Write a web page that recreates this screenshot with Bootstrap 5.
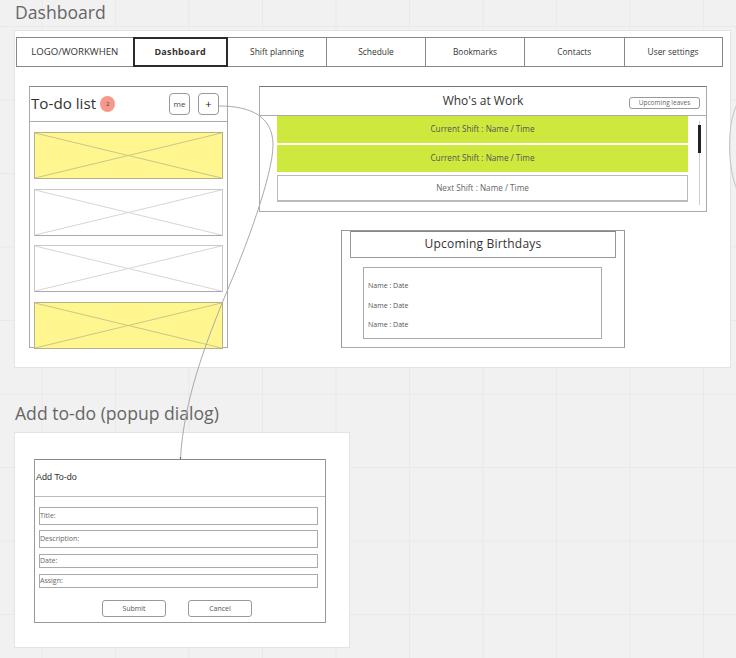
<!DOCTYPE html>
<html lang="en">
  <head>
    <meta charset="UTF-8" />
    <title>Dashboard wireframe</title>
    <link
      rel="stylesheet"
      href="https://cdn.jsdelivr.net/npm/bootstrap@5.3.0/dist/css/bootstrap.min.css"
    />
    <style>
      body {
        margin: 0;
        font-family: "Open Sans", sans-serif;
        color: #333;
        overflow: hidden;
      }
      /* board */
      .board {
        position: relative;
        width: 736px;
        height: 658px;
        overflow: hidden;
        background-color: #f1f1f1;
        background-image: linear-gradient(#e9e9e9 1px, transparent 1px),
          linear-gradient(90deg, #e9e9e9 1px, transparent 1px);
        background-size: 73.5px 73.5px;
        background-position: 41.5px 26px;
      }
      .frame-label {
        position: absolute;
        left: 15px;
        margin: 0;
        font-size: 17.6px;
        line-height: 24px;
        color: #666;
        font-weight: 400;
      }
      .frame {
        position: absolute;
        background: #fff;
        border: 1px solid #e4e4e4;
      }
      .frame-main {
        left: 14px;
        top: 30px;
        width: 717px;
        height: 338px;
        padding: 6px 0 0 1px;
      }
      .frame-popup {
        left: 14px;
        top: 432px;
        width: 336px;
        height: 216px;
        padding: 26px 0 0 19px;
      }
      .wires {
        position: absolute;
        left: 0;
        top: 0;
        pointer-events: none;
      }
      /* top menu */
      .menu-bar {
        display: grid;
        grid-template-columns: 116.5px 94.5px 99px 99px 99px 99.5px 98px;
        width: 706px;
        height: 30px;
        margin-left: 1px;
        font-size: 8.4px;
      }
      .menu-item {
        border: 1px solid #888;
        border-bottom-width: 1.5px;
        margin-left: -1px;
        color: #333;
        text-decoration: none;
      }
      .menu-item.is-logo {
        font-size: 9.6px;
      }
      .menu-item.is-current {
        border: 2px solid #2b2b2b;
        font-size: 9px;
        font-weight: 700;
        letter-spacing: 0.3px;
        z-index: 1;
      }
      /* to-do panel */
      .panels {
        margin: 19px 0 0 13px;
      }
      .todo-panel {
        width: 199px;
        height: 262px;
        border: 1px solid #aaa;
        border-top-color: #888;
      }
      .todo-head {
        height: 35px;
        border-bottom: 1px solid #aaa;
        padding: 0 8px 0 1px;
      }
      .todo-title {
        font-size: 15.2px;
        margin: 0 0 2px;
        font-weight: 400;
        color: #333;
      }
      .count-pill {
        width: 15px;
        height: 16px;
        margin-left: 4px;
        border-radius: 50%;
        background: #f6998a;
        font-size: 6px;
        color: #444;
      }
      .mini-btn {
        width: 21px;
        height: 22px;
        padding: 0;
        background: #fff;
        border: 1px solid #999;
        border-radius: 4px;
        font-size: 8px;
        color: #444;
      }
      .mini-btn + .mini-btn {
        margin-left: 8px;
        font-size: 11px;
        color: #222;
      }
      .todo-items {
        padding: 10px 4px 0 4px;
        gap: 9.5px;
      }
      .todo-card {
        display: block;
        width: 188.5px;
        height: 47px;
        background: #fff;
        border: 1px solid #c8c8c8;
        border-bottom-color: #aaa;
      }
      .todo-card line {
        stroke: #d4d4d4;
        stroke-width: 1;
      }
      .todo-card.is-flagged {
        background: #fff68f;
        border-color: #b5b28a;
      }
      .todo-card.is-flagged line {
        stroke: #c8c48a;
      }
      /* who's at work */
      .work-side {
        margin-left: 31px;
      }
      .work-panel {
        width: 448px;
        height: 126px;
        border: 1px solid #aaa;
        border-top-color: #777;
      }
      .work-head {
        position: relative;
        height: 29px;
        border-bottom: 1px solid #aaa;
        font-size: 12px;
        color: #333;
      }
      .leaves-btn {
        position: absolute;
        left: 369px;
        top: 10px;
        width: 71px;
        height: 12px;
        padding: 0;
        line-height: 10px;
        background: #fff;
        border: 1px solid #999;
        border-radius: 3px;
        font-size: 6.5px;
        color: #666;
      }
      .shift-list {
        padding-left: 17px;
        width: 428px;
      }
      .shift-row {
        width: 411px;
        font-size: 8.2px;
        color: #555;
      }
      .shift-now {
        height: 27px;
        margin-bottom: 1.5px;
        background: #cfe83e;
      }
      .shift-next {
        height: 27px;
        margin-top: 3.5px;
        border: 1px solid #bbb;
        border-bottom-width: 2px;
        background: #fff;
        color: #666;
      }
      .fake-scroll {
        position: absolute;
        left: 439px;
        top: 34px;
        width: 1px;
        height: 84px;
        background: #ccc;
      }
      .fake-scroll::before {
        content: "";
        position: absolute;
        left: -1px;
        top: 4px;
        width: 3px;
        height: 28px;
        background: #222;
      }
      /* birthdays */
      .bday-panel {
        width: 284px;
        height: 118px;
        margin: 18px 0 0 82px;
        border: 1px solid #999;
        border-bottom-color: #aaa;
      }
      .bday-head {
        width: 266px;
        height: 27px;
        margin: 0 0 0 8px;
        padding-bottom: 2px;
        border: 1px solid #999;
        border-top-color: #888;
        font-size: 12px;
        letter-spacing: 0.2px;
        color: #333;
      }
      .bday-box {
        width: 239px;
        height: 72px;
        margin: 9px 0 0 21px;
        padding: 8px 0 0 4px;
        border: 1px solid #aaa;
        font-size: 7px;
        color: #555;
      }
      .bday-box div {
        height: 19.5px;
        line-height: 19.5px;
      }
      /* dialog */
      .dialog-box {
        width: 292px;
        height: 164px;
        border: 1px solid #999;
        border-top-color: #888;
      }
      .dialog-head {
        height: 37px;
        padding-left: 1px;
        border-bottom: 1px solid #bbb;
        font-family: "Liberation Sans", Arial, sans-serif;
        font-size: 9px;
        color: #333;
      }
      .dialog-form {
        padding: 10px 0 0 4px;
      }
      .field-line {
        width: 279px;
        margin: 0;
        border: 1px solid #aaa;
        border-bottom-width: 1.5px;
        font-size: 7px;
        color: #666;
      }
      .field-tall {
        height: 18px;
        margin-bottom: 5px;
      }
      .field-tall + .field-short {
        margin-top: 6px;
      }
      .field-short {
        height: 14px;
        margin-bottom: 6px;
      }
      .dialog-actions {
        margin: 12px 0 0 63px;
        gap: 22px;
      }
      .dialog-btn {
        width: 64px;
        height: 17px;
        padding: 0;
        line-height: 14px;
        background: #fff;
        border: 1px solid #999;
        border-radius: 3px;
        font-size: 7px;
        color: #555;
      }
    </style>
  </head>
  <body>
    <div class="board">
      <h1 class="frame-label" style="top: 0px">Dashboard</h1>
      <section class="frame frame-main">
        <nav class="menu-bar">
          <a class="menu-item is-logo d-flex align-items-center justify-content-center" href="#">LOGO/WORKWHEN</a>
          <a class="menu-item is-current d-flex align-items-center justify-content-center" href="#">Dashboard</a>
          <a class="menu-item d-flex align-items-center justify-content-center" href="#">Shift planning</a>
          <a class="menu-item d-flex align-items-center justify-content-center" href="#">Schedule</a>
          <a class="menu-item d-flex align-items-center justify-content-center" href="#">Bookmarks</a>
          <a class="menu-item d-flex align-items-center justify-content-center" href="#">Contacts</a>
          <a class="menu-item d-flex align-items-center justify-content-center" href="#">User settings</a>
        </nav>

        <div class="panels d-flex align-items-start">
          <div class="todo-panel">
            <div class="todo-head d-flex align-items-center">
              <h2 class="todo-title">To-do list</h2>
              <span class="count-pill d-flex align-items-center justify-content-center">2</span>
              <div class="ms-auto d-flex">
                <button class="mini-btn" type="button">me</button>
                <button class="mini-btn" type="button">+</button>
              </div>
            </div>
            <div class="todo-items d-flex flex-column">
              <svg class="todo-card is-flagged" viewBox="0 0 189 47" preserveAspectRatio="none"><line x1="0" y1="0" x2="189" y2="47" /><line x1="0" y1="47" x2="189" y2="0" /></svg>
              <svg class="todo-card" viewBox="0 0 189 47" preserveAspectRatio="none"><line x1="0" y1="0" x2="189" y2="47" /><line x1="0" y1="47" x2="189" y2="0" /></svg>
              <svg class="todo-card" viewBox="0 0 189 47" preserveAspectRatio="none"><line x1="0" y1="0" x2="189" y2="47" /><line x1="0" y1="47" x2="189" y2="0" /></svg>
              <svg class="todo-card is-flagged" viewBox="0 0 189 47" preserveAspectRatio="none"><line x1="0" y1="0" x2="189" y2="47" /><line x1="0" y1="47" x2="189" y2="0" /></svg>
            </div>
          </div>

          <div class="work-side">
            <div class="work-panel position-relative">
              <div class="work-head d-flex align-items-center justify-content-center">
                Who's at Work
                <button class="leaves-btn" type="button">Upcoming leaves</button>
              </div>
              <div class="shift-list">
                <div class="shift-row shift-now d-flex align-items-center justify-content-center">Current Shift : Name / Time</div>
                <div class="shift-row shift-now d-flex align-items-center justify-content-center">Current Shift : Name / Time</div>
                <div class="shift-row shift-next d-flex align-items-center justify-content-center">Next Shift : Name / Time</div>
              </div>
              <div class="fake-scroll"></div>
            </div>

            <div class="bday-panel">
              <div class="bday-head d-flex align-items-center justify-content-center">Upcoming Birthdays</div>
              <div class="bday-box">
                <div>Name : Date</div>
                <div>Name : Date</div>
                <div>Name : Date</div>
              </div>
            </div>
          </div>
        </div>
      </section>

      <h1 class="frame-label" style="top: 401px">Add to-do (popup dialog)</h1>
      <section class="frame frame-popup">
        <div class="dialog-box">
          <div class="dialog-head d-flex align-items-center">Add To-do</div>
          <form class="dialog-form">
            <div class="field-line field-tall d-flex align-items-center">Title:</div>
            <div class="field-line field-tall d-flex align-items-center">Description:</div>
            <div class="field-line field-short d-flex align-items-center">Date:</div>
            <div class="field-line field-short d-flex align-items-center">Assign:</div>
            <div class="dialog-actions d-flex">
              <button class="dialog-btn" type="button">Submit</button>
              <button class="dialog-btn" type="button">Cancel</button>
            </div>
          </form>
        </div>
      </section>

      <svg class="wires" width="736" height="658" viewBox="0 0 736 658" fill="none">
        <path d="M219 106 C 250 106 273 116 273 145 C 273 175 245 250 225 296 C 205 345 184 400 180.5 458" stroke="#aaa" stroke-width="1" />
        <path d="M179.5 457.5 L181.5 457.5 L180.5 459.5 Z" fill="#555" />
        <path d="M737 104 C 727 125 727 165 737 190" stroke="#c4c4c4" stroke-width="1" />
      </svg>
    </div>
    <script src="https://cdn.jsdelivr.net/npm/bootstrap@5.3.0/dist/js/bootstrap.bundle.min.js"></script>
  </body>
</html>
